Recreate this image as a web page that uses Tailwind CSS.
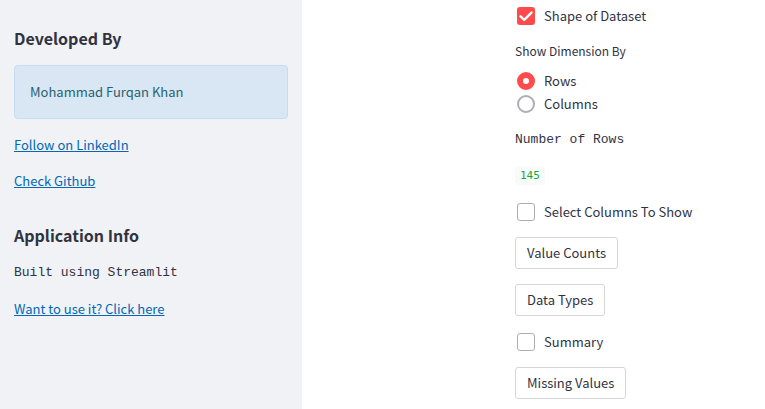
<!DOCTYPE html>
<html lang="en">
<head>
<meta charset="utf-8">
<meta name="viewport" content="width=device-width, initial-scale=1">
<title>Dataset Explorer</title>
<script src="https://cdn.jsdelivr.net/npm/@tailwindcss/browser@4"></script>
</head>
<body class="flex min-h-screen bg-white font-['Noto_Sans_CJK_SC',sans-serif] text-[13px] leading-[21px] text-[#31333f]">
  <aside class="w-[302px] shrink-0 bg-[#f0f2f6] px-3.5 pt-[26px]">
    <section class="flex flex-col items-start gap-[15px]">
      <h2 class="text-base leading-6 font-bold">Developed By</h2>
      <div class="w-full rounded-sm border border-[#c8dcf0] bg-[#d9e7f4] p-[15px] leading-[22px] text-[#27626e]">Mohammad Furqan Khan</div>
      <a href="#linkedin" class="text-[#0068b5] underline">Follow on LinkedIn</a>
      <a href="#github" class="text-[#0068b5] underline">Check Github</a>
    </section>
    <section class="mt-8 flex flex-col items-start gap-[15px]">
      <h2 class="text-base leading-6 font-bold">Application Info</h2>
      <p class="font-['Liberation_Mono',monospace]">Built using Streamlit</p>
      <a href="#app" class="text-[#0068b5] underline">Want to use it? Click here</a>
    </section>
  </aside>
  <main class="flex grow flex-col items-start gap-[15px] pt-[5px] pl-[213px]">
    <label class="flex items-center gap-[9px] pl-0.5">
      <span class="grid size-[18px] shrink-0">
        <input type="checkbox" checked class="col-start-1 row-start-1 size-[18px] appearance-none rounded-[3px] bg-[#ff4b4b]">
        <svg class="pointer-events-none col-start-1 row-start-1" viewBox="0 0 18 18" fill="none" stroke="white" stroke-width="2.4" stroke-linecap="round" stroke-linejoin="round"><path d="M3.5 9.3 7.2 12.8 14.5 5.6"/></svg>
      </span>
      Shape of Dataset
    </label>
    <fieldset>
      <legend class="mb-[9px] text-xs leading-5">Show Dimension By</legend>
      <div class="flex flex-col gap-0.5">
        <label class="flex items-center gap-[9px] pl-0.5"><input type="radio" name="dimension" checked class="size-[18px] shrink-0 appearance-none rounded-full border-[6px] border-[#ff4b4b] bg-white">Rows</label>
        <label class="flex items-center gap-[9px] pl-0.5"><input type="radio" name="dimension" class="size-[18px] shrink-0 appearance-none rounded-full border-2 border-[#adaeb3] bg-white">Columns</label>
      </div>
    </fieldset>
    <p class="font-['Liberation_Mono',monospace]">Number of Rows</p>
    <p class="flex"><code class="my-px rounded-sm bg-[#f9fafb] px-[5px] font-['DejaVu_Sans_Mono',monospace] text-[11px] leading-[19px] text-[#09ab3b]">145</code></p>
    <label class="flex items-center gap-[9px] pl-0.5"><input type="checkbox" class="size-[18px] shrink-0 appearance-none rounded-[3px] border border-[#adaeb3] bg-white">Select Columns To Show</label>
    <button type="button" class="rounded-[3px] border border-[#d5d6d9] px-[11px] py-1 leading-[22px]">Value Counts</button>
    <button type="button" class="rounded-[3px] border border-[#d5d6d9] px-[11px] py-1 leading-[22px]">Data Types</button>
    <label class="flex items-center gap-[9px] pl-0.5"><input type="checkbox" class="size-[18px] shrink-0 appearance-none rounded-[3px] border border-[#adaeb3] bg-white">Summary</label>
    <button type="button" class="rounded-[3px] border border-[#d5d6d9] px-[11px] py-1 leading-[22px]">Missing Values</button>
  </main>
</body>
</html>
